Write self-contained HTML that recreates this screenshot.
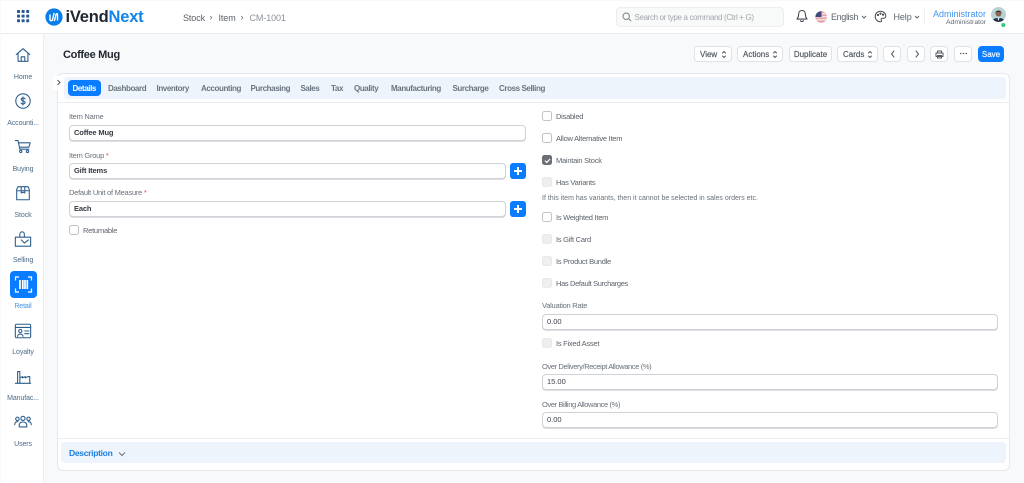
<!DOCTYPE html>
<html lang="en"><head><meta charset="utf-8"><title>Coffee Mug</title>
<style>
*{box-sizing:border-box}
html,body{margin:0;padding:0;width:1024px;height:483px;overflow:hidden;background:#f8f9fb;font-family:"Liberation Sans",sans-serif;color:#4c5560}
#w{position:absolute;left:0;top:0;width:1024px;height:483px;filter:blur(.3px)}
.a{position:absolute}
.t{position:absolute;white-space:nowrap;line-height:12px;height:12px;margin-top:1px}
#top{left:1px;top:1px;width:1023px;height:33px;background:#fff;border-bottom:1px solid #e9ecef}
#side{left:1px;top:34px;width:43px;height:449px;background:#fff;border-right:1px solid #eceef0}
.nav{left:0;width:46px;text-align:center;font-size:7px;color:#4a6a8a;letter-spacing:-.1px;margin-top:2px}
.ic{position:absolute;left:14px;width:18px;height:18px;fill:none;stroke:#2d5f8d;stroke-width:1.2;stroke-linecap:round;stroke-linejoin:round}
.btn{position:absolute;top:46px;height:16px;background:#fff;border:1px solid #dfe2e6;border-radius:4px;font-size:8px;line-height:16px;text-align:center;color:#4c535b;-webkit-text-stroke:.15px #4c535b}
.btn svg{position:absolute;fill:none;stroke:#525a63;stroke-width:1;stroke-linecap:round;stroke-linejoin:round}
#card{left:57px;top:73px;width:953px;height:398px;background:#fff;border:1px solid #e6e8eb;border-radius:6px}
.tab{top:82px;font-size:8px;font-weight:bold;color:#6b7580;letter-spacing:-.4px}
.lab{font-size:7.5px;color:#69717a;letter-spacing:-.25px}
.inp{position:absolute;height:16px;background:#fff;border:1px solid #cfd2d6;border-radius:4px;font-size:7.5px;line-height:14px;padding-left:4px;color:#3c424a;box-shadow:0 1px 0 #dcdee1}
.b{font-weight:bold;color:#343a42;letter-spacing:-.15px}
.plus{position:absolute;left:510px;width:16px;height:16px;background:#0a7cff;border-radius:3px}
.plus:before,.plus:after{content:"";position:absolute;background:#fff}
.plus:before{left:4px;top:7px;width:8px;height:1.6px}
.plus:after{left:7.2px;top:4px;width:1.6px;height:8px}
.cb{position:absolute;left:542px;width:10px;height:10px;background:#fff;border:1px solid #c0c4c9;border-radius:2.5px}
.cb.d{background:#efefef;border-color:#e8e8e8}
.cl{left:556px;font-size:7.5px;color:#5c636b;letter-spacing:-.25px}
</style></head><body>
<div id="w">

<div class="a" id="top"></div>
<div class="a" id="side"></div>

<svg class="a" style="left:17px;top:10px" width="13" height="13" fill="#2a5a94"><rect x="0" y="0" width="3" height="3" rx=".6"/><rect x="4.6" y="0" width="3" height="3" rx=".6"/><rect x="9.2" y="0" width="3" height="3" rx=".6"/><rect x="0" y="4.6" width="3" height="3" rx=".6"/><rect x="4.6" y="4.6" width="3" height="3" rx=".6"/><rect x="9.2" y="4.6" width="3" height="3" rx=".6"/><rect x="0" y="9.2" width="3" height="3" rx=".6"/><rect x="4.6" y="9.2" width="3" height="3" rx=".6"/><rect x="9.2" y="9.2" width="3" height="3" rx=".6"/></svg>

<svg class="a" style="left:45px;top:8px" width="18" height="18"><circle cx="9" cy="9" r="8.6" fill="#0a7ee8"/><path d="M5 7v4.500c0 1.500 2.400 1.500 2.600 0L9 5.500M9.500 12.500L11 6.500c.3-1 1.500-1 1.500 0V12" fill="none" stroke="#fff" stroke-width="1.400" stroke-linecap="round"/></svg>
<div class="t" style="left:65.5px;top:6px;height:20px;line-height:20px;font-size:16.500px;font-weight:bold;color:#1f2730;letter-spacing:-.2px">iVend<span style="color:#1283ea">Next</span></div>

<div class="t" style="left:183px;top:10.500px;font-size:9px;color:#5b6168;letter-spacing:-.1px">Stock</div>
<div class="t" style="left:209.500px;top:10px;font-size:9px;color:#5b6168">›</div>
<div class="t" style="left:218.500px;top:10.500px;font-size:9px;color:#5b6168;letter-spacing:-.1px">Item</div>
<div class="t" style="left:240.500px;top:10px;font-size:9px;color:#5b6168">›</div>
<div class="t" style="left:249.500px;top:10.500px;font-size:9px;color:#8a9097;letter-spacing:-.1px">CM-1001</div>

<div class="a" style="left:616px;top:7px;width:168px;height:20px;background:#f8f9f9;border:1px solid #eceeee;border-radius:4px"></div>
<svg class="a" style="left:622px;top:12px" width="10" height="10" fill="none" stroke="#7a8087" stroke-width="1"><circle cx="4.200" cy="4.200" r="3.200"/><path d="M6.600 6.600L9.200 9.200"/></svg>
<div class="t" style="left:634.500px;top:10.500px;font-size:8px;color:#a2a7ac;letter-spacing:-.35px">Search or type a command (Ctrl + G)</div>

<svg class="a" style="left:796px;top:9px" width="12" height="14" fill="none" stroke="#444b53" stroke-width="1.100" stroke-linecap="round" stroke-linejoin="round"><path d="M6 1.500C3.500 1.500 2.600 3.500 2.600 5.500c0 2.600-1 3.600-1.600 4.600h10c-.6-1-1.600-2-1.600-4.600 0-2-.9-4-3.400-4zM4.600 11.600c.3 1.200 2.500 1.200 2.800 0"/></svg>
<svg class="a" style="left:815px;top:11px" width="13" height="12"><clipPath id="fc"><circle cx="6.200" cy="6" r="5.800"/></clipPath><g clip-path="url(#fc)"><rect width="13" height="12" fill="#e6a3a8"/><rect y="2" width="13" height="1.500" fill="#f3dfe0"/><rect y="5" width="13" height="1.500" fill="#f3dfe0"/><rect y="8" width="13" height="1.500" fill="#f3dfe0"/><rect width="6.500" height="6" fill="#3e4a80"/></g></svg>
<div class="t" style="left:831px;top:10px;font-size:9px;color:#5f666e;letter-spacing:-.35px">English</div>
<svg class="a" style="left:861px;top:15px" width="6" height="5" fill="none" stroke="#5f666e" stroke-width="1"><path d="M1 1l2 2 2-2"/></svg>
<svg class="a" style="left:874px;top:10px" width="13" height="13" fill="none" stroke="#444b53" stroke-width="1"><path d="M6.500 1.200a5.300 5.300 0 1 0 0 10.600c1.300 0 1.200-1.200.8-1.800-.5-.8 0-1.800 1-1.800h1.600c1 0 1.900-.8 1.900-2C11.800 3.200 9.400 1.200 6.500 1.200z"/><circle cx="4" cy="5" r=".6"/><circle cx="6.500" cy="3.600" r=".6"/><circle cx="9" cy="4.600" r=".6"/></svg>
<div class="t" style="left:893.500px;top:10px;font-size:9px;color:#5f666e;letter-spacing:-.1px">Help</div>
<svg class="a" style="left:914px;top:15px" width="6" height="5" fill="none" stroke="#5f666e" stroke-width="1"><path d="M1 1l2 2 2-2"/></svg>
<div class="a" style="left:924px;top:9px;width:1px;height:16px;background:#eceeef"></div>
<div class="t" style="left:933px;top:6.500px;font-size:9px;color:#3f95ee">Administrator</div>
<div class="t" style="left:946px;top:15.500px;font-size:6.800px;color:#5f666e">Administrator</div>
<svg class="a" style="left:991px;top:7px" width="16" height="22"><clipPath id="av"><circle cx="7.500" cy="7.500" r="7.500"/></clipPath><g clip-path="url(#av)"><rect width="16" height="16" fill="#b9d3d4"/><path d="M1 16c0-4 3-5 6.500-5S14 12 14 16z" fill="#1f3448"/><path d="M6.500 11l1 3 1-3z" fill="#e9e9e9"/><circle cx="7.500" cy="6.500" r="3" fill="#8a6650"/><path d="M4.400 6c0-3 6.200-3 6.200 0 0-.8-1.500-1.300-3-1.300S4.400 5.200 4.400 6z" fill="#222"/></g><circle cx="12.300" cy="18" r="2" fill="#2ecc71"/></svg>

<svg class="ic" style="top:46px" viewBox="0 0 20 20"><path d="M2.500 9.500L10 3l7.500 6.500M4.500 8.500V17h11V8.500M8 17v-5h4v5"/></svg>
<div class="t nav" style="top:70px">Home</div>
<svg class="ic" style="top:92px" viewBox="0 0 20 20"><circle cx="10" cy="10" r="8"/><path d="M12.300 7.600C12 6.500 8 6.300 8 8.200c0 2 4.300 1.300 4.300 3.500 0 2-4.200 1.800-4.500.6M10 5.500v9"/></svg>
<div class="t nav" style="top:116px">Accounti...</div>
<svg class="ic" style="top:137px" viewBox="0 0 20 20"><path d="M1.500 4h3l2 9.500h10M5 6.500h13l-1.500 4.800H6"/><circle cx="7.500" cy="16" r="1.300"/><circle cx="15" cy="16" r="1.300"/></svg>
<div class="t nav" style="top:162px">Buying</div>
<svg class="ic" style="top:184px" viewBox="0 0 20 20"><path d="M4.500 3h11l1.500 3v11.500H3V6zM3 7.500h14M8 3v7l2-1 2 1V3"/></svg>
<div class="t nav" style="top:208px">Stock</div>
<svg class="ic" style="top:230px" viewBox="0 0 20 20"><path d="M1.500 8h17v10h-17zM6.500 8V4.500a2.500 2.500 0 0 1 5 0V8M8 11l3.500 3.500L16 11"/></svg>
<div class="t nav" style="top:253px">Selling</div>

<div class="a" style="left:10px;top:271px;width:27px;height:27px;background:#0a7cff;border-radius:4px"></div>
<svg class="a" style="left:13px;top:274px" width="21" height="21" fill="none" stroke="#fff" stroke-width="1.200"><path d="M2.500 6.500V3h3.500M15 3h3.500v3.500M2.500 14.500V18h3.500M15 18h3.500v-3.500"/><path d="M7 6v9M9.800 6v9M12 6v9M14.300 6v9" stroke-width="1.700"/></svg>
<div class="t nav" style="top:299px;color:#3f8fe8">Retail</div>

<svg class="ic" style="top:322px" viewBox="0 0 20 20"><rect x="1.500" y="2.500" width="17" height="15" rx="1.500"/><path d="M1.500 6h17M12 10h4.500M12 13h4.500"/><circle cx="7" cy="10" r="1.800"/><path d="M4 16c0-3.500 6-3.500 6 0"/></svg>
<div class="t nav" style="top:345px">Loyalty</div>
<svg class="ic" style="top:368px" viewBox="0 0 20 20"><path d="M4 17V4h2.500v13M1.500 17h17M6.500 11l3-1.500V11l3-1.500V11l3-1.500h2v7.500"/></svg>
<div class="t nav" style="top:391px">Manufac...</div>
<svg class="ic" style="top:413px" viewBox="0 0 20 20"><circle cx="10" cy="6" r="2.300"/><circle cx="3.800" cy="6.500" r="1.900"/><circle cx="16.200" cy="6.500" r="1.900"/><path d="M5.800 15.500V14c0-3 2-4 4.200-4s4.200 1 4.200 4v1.500zM.8 13c0-2.500 1.500-3.500 3.500-3.300M19.200 13c0-2.500-1.500-3.500-3.500-3.300"/></svg>
<div class="t nav" style="top:437px">Users</div>

<div class="t" style="left:63px;top:48px;font-size:11px;font-weight:bold;color:#1f262e;letter-spacing:-.3px">Coffee Mug</div>

<div class="btn" style="left:694px;width:38px;text-align:left;padding-left:5px">View<svg style="left:26px;top:3px" width="6" height="9"><path d="M1.500 3l1.500-1.500L4.500 3M1.500 6l1.500 1.500L4.500 6"/></svg></div>
<div class="btn" style="left:737px;width:46px;text-align:left;padding-left:5px">Actions<svg style="left:34px;top:3px" width="6" height="9"><path d="M1.500 3l1.500-1.500L4.500 3M1.500 6l1.500 1.500L4.500 6"/></svg></div>
<div class="btn" style="left:789px;width:43px">Duplicate</div>
<div class="btn" style="left:837px;width:41px;text-align:left;padding-left:5px">Cards<svg style="left:29px;top:3px" width="6" height="9"><path d="M1.500 3l1.500-1.500L4.500 3M1.500 6l1.500 1.500L4.500 6"/></svg></div>
<div class="btn" style="left:883px;width:18px"><svg style="left:6px;top:3px" width="6" height="8"><path d="M4 1L1.500 4 4 7"/></svg></div>
<div class="btn" style="left:907px;width:18px"><svg style="left:6px;top:3px" width="6" height="8"><path d="M2 1l2.500 3L2 7"/></svg></div>
<div class="btn" style="left:930px;width:18px"><svg style="left:4px;top:3px" width="9" height="9"><path d="M2.500 3V1h4v2M1 3h7v3.500H1zM2.500 5.500h4v2.500h-4z"/></svg></div>
<div class="btn" style="left:954px;width:18px"><svg style="left:4px;top:5px" width="9" height="4"><path d="M1.500 1.500h.4M4.300 1.500h.4M7.100 1.500h.4" stroke-width="1.200"/></svg></div>
<div class="btn" style="left:978px;width:26px;background:#0a7cff;border-color:#0a7cff;color:#fff;-webkit-text-stroke:.15px #fff">Save</div>

<div class="a" id="card"></div>
<div class="a" style="left:53px;top:76px;width:11px;height:14px;background:#fff;border-radius:2px"></div>
<svg class="a" style="left:56px;top:79px" width="6" height="7" fill="none" stroke="#555" stroke-width="1"><path d="M1.500 1l2.500 2.500L1.500 6"/></svg>

<div class="a" style="left:64px;top:77px;width:942px;height:22px;background:#edf4fb;border-radius:3px"></div>
<div class="a" style="left:58px;top:102px;width:951px;height:1px;background:#ebedef"></div>
<div class="a" style="left:68px;top:80px;width:33px;height:16px;background:#0a7cff;border-radius:4px"></div>
<div class="t tab" style="left:72.500px;color:#fff">Details</div>
<div class="t tab" style="left:108px">Dashboard</div>
<div class="t tab" style="left:156.500px">Inventory</div>
<div class="t tab" style="left:201px">Accounting</div>
<div class="t tab" style="left:250.500px">Purchasing</div>
<div class="t tab" style="left:300.500px">Sales</div>
<div class="t tab" style="left:331px">Tax</div>
<div class="t tab" style="left:354px">Quality</div>
<div class="t tab" style="left:391px">Manufacturing</div>
<div class="t tab" style="left:452.500px">Surcharge</div>
<div class="t tab" style="left:499px">Cross Selling</div>

<div class="t lab" style="left:69px;top:110px">Item Name</div>
<div class="inp b" style="left:69px;top:125px;width:457px">Coffee Mug</div>
<div class="t lab" style="left:69px;top:149px">Item Group <span style="color:#e24c4c">*</span></div>
<div class="inp b" style="left:69px;top:163px;width:437px">Gift Items</div>
<div class="plus" style="top:163px"></div>
<div class="t lab" style="left:69px;top:186px">Default Unit of Measure <span style="color:#e24c4c">*</span></div>
<div class="inp b" style="left:69px;top:201px;width:437px">Each</div>
<div class="plus" style="top:201px"></div>
<div class="cb" style="left:69px;top:225px"></div>
<div class="t cl" style="left:83px;top:224px">Returnable</div>

<div class="cb" style="top:111px"></div><div class="t cl" style="top:110px">Disabled</div>
<div class="cb" style="top:133px"></div><div class="t cl" style="top:132px">Allow Alternative Item</div>
<div class="cb" style="top:155px;background:#6b6e72;border-color:#6b6e72"><svg class="a" style="left:1px;top:1px" width="7" height="7" fill="none" stroke="#fff" stroke-width="1.200"><path d="M1 3.700l1.800 1.800L6 2"/></svg></div><div class="t cl" style="top:154px">Maintain Stock</div>
<div class="cb d" style="top:177px"></div><div class="t cl" style="top:176px">Has Variants</div>
<div class="t lab" style="left:542px;top:192px;font-size:7px;letter-spacing:0">If this item has variants, then it cannot be selected in sales orders etc.</div>
<div class="cb" style="top:212px"></div><div class="t cl" style="top:211px">Is Weighted Item</div>
<div class="cb d" style="top:234px"></div><div class="t cl" style="top:233px">Is Gift Card</div>
<div class="cb d" style="top:256px"></div><div class="t cl" style="top:255px">Is Product Bundle</div>
<div class="cb d" style="top:278px"></div><div class="t cl" style="top:277px;letter-spacing:-.35px">Has Default Surcharges</div>

<div class="t lab" style="left:542px;top:299px">Valuation Rate</div>
<div class="inp" style="left:542px;top:314px;width:456px">0.00</div>
<div class="cb d" style="top:338px"></div><div class="t cl" style="top:337px">Is Fixed Asset</div>
<div class="t lab" style="left:542px;top:360px;letter-spacing:-.38px">Over Delivery/Receipt Allowance (%)</div>
<div class="inp" style="left:542px;top:374px;width:456px">15.00</div>
<div class="t lab" style="left:542px;top:398px;letter-spacing:-.38px">Over Billing Allowance (%)</div>
<div class="inp" style="left:542px;top:412px;width:456px">0.00</div>

<div class="a" style="left:58px;top:438px;width:951px;height:1px;background:#ebedef"></div>
<div class="a" style="left:61px;top:442px;width:945px;height:21px;background:#edf4fb;border-radius:4px"></div>
<div class="t" style="left:69px;top:446px;font-size:8.500px;font-weight:bold;color:#1a7fe0;letter-spacing:-.3px">Description</div>
<svg class="a" style="left:118px;top:451px" width="8" height="6" fill="none" stroke="#6b7178" stroke-width="1"><path d="M1 1.500l3 3 3-3"/></svg>

</div>
</body></html>
